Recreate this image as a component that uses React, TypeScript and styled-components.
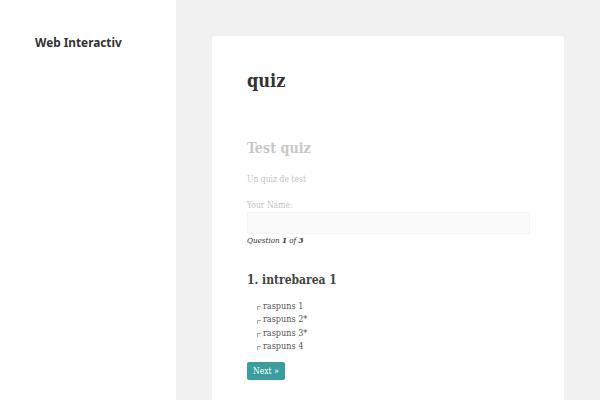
import React from "react";
import styled, { createGlobalStyle } from "styled-components";

const GlobalStyle = createGlobalStyle`
  html, body { margin: 0; padding: 0; background: #f1f1f1; }
  body { font-family: "DejaVu Serif Condensed", "DejaVu Serif", serif; font-stretch: condensed; }
`;

const Page = styled.div`
  display: flex;
  height: 400px;
  overflow: hidden;
`;

const Sidebar = styled.aside`
  width: 141px;
  flex: none;
  background: #fff;
  padding: 32px 0 0 35px;
`;

const SiteTitle = styled.a`
  font-family: "Noto Sans", "Open Sans", sans-serif;
  font-weight: 700;
  font-size: 11.8px;
  color: #333;
  text-decoration: none;
`;

const Main = styled.main`
  flex: 1;
  padding: 36px 36px 0 36px;
`;

const Card = styled.article`
  background: #fff;
  width: 282px;
  padding: 33px 35px 20px 35px;
  min-height: 346px;
  border-radius: 2px;
  box-shadow: 0 0 1px rgba(0, 0, 0, 0.1);
`;

const Title = styled.h1`
  margin: 0;
  font-size: 18px;
  line-height: 24px;
  color: #333;
  font-weight: 700;
`;

const QuizTitle = styled.h2`
  margin: 45px 0 0;
  font-size: 14.2px;
  line-height: 20px;
  color: #c8c8c8;
  font-weight: 700;
`;

const Muted = styled.p<{ gap: number }>`
  margin: ${(p) => p.gap}px 0 0;
  font-size: 8.5px;
  line-height: 12px;
  color: #c4c4c4;
`;

const NameInput = styled.input`
  display: block;
  box-sizing: border-box;
  width: 283px;
  height: 22px;
  margin: 1px 0 0;
  border: 1px solid #f5f5f5;
  background: #fafafa;
  border-radius: 2px;
`;

const Progress = styled.p`
  margin: 0;
  font-size: 8px;
  line-height: 12px;
  font-style: italic;
  color: #333;
`;

const Question = styled.h3`
  margin: 24px 0 0;
  font-size: 12px;
  line-height: 18px;
  font-weight: 700;
  color: #444;
`;

const Answers = styled.ul`
  list-style: none;
  margin: 11px 0 0;
  padding: 0 0 0 10px;
`;

const Answer = styled.li`
  display: flex;
  align-items: center;
  gap: 2px;
  font-size: 9px;
  line-height: 13.4px;
  color: #555;
`;

const Box = styled.span`
  display: inline-block;
  width: 3px;
  height: 3px;
  margin-top: 3px;
  border-top: 1px solid #aaa;
  border-left: 1px solid #aaa;
  background: #f4f4f4;
`;

const NextButton = styled.button`
  display: block;
  margin-top: 8px;
  background: #3a9d9e;
  color: #fff;
  border: 0;
  border-radius: 2px;
  font-family: inherit;
  font-stretch: condensed;
  font-size: 8.5px;
  height: 18px;
  padding: 0 6px;
`;

const answers = ["raspuns 1", "raspuns 2*", "raspuns 3*", "raspuns 4"];

export default function App() {
  return (
    <>
      <GlobalStyle />
      <Page>
        <Sidebar>
          <SiteTitle href="#">Web Interactiv</SiteTitle>
        </Sidebar>
        <Main>
          <Card>
            <Title>quiz</Title>
            <QuizTitle>Test quiz</QuizTitle>
            <Muted gap={15}>Un quiz de test</Muted>
            <Muted gap={14}>Your Name:</Muted>
            <NameInput type="text" />
            <Progress>
              Question <b>1</b> of <b>3</b>
            </Progress>
            <Question>1. intrebarea 1</Question>
            <Answers>
              {answers.map((a) => (
                <Answer key={a}>
                  <Box />
                  {a}
                </Answer>
              ))}
            </Answers>
            <NextButton>Next »</NextButton>
          </Card>
        </Main>
      </Page>
    </>
  );
}
